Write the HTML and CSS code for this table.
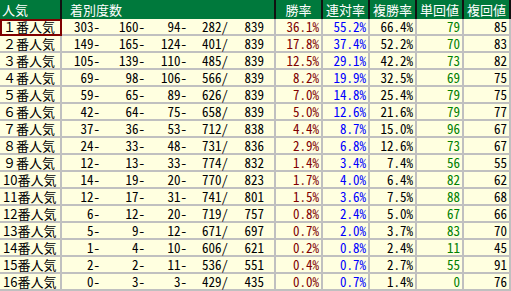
FILE: index.html
```html
<!DOCTYPE html>
<html lang="ja">
<head>
<meta charset="utf-8">
<title>人気別成績</title>
<link rel="stylesheet" href="styles.css">
</head>
<body>
<table class="stats">
<thead>
<tr>
<th class="c-name h-left">人気</th>
<th class="c-count h-left2">着別度数</th>
<th class="c-rate">勝率</th>
<th class="c-rate">連対率</th>
<th class="c-rate">複勝率</th>
<th class="c-rate">単回値</th>
<th class="c-rate">複回値</th>
</tr>
</thead>
<tbody>
<tr><td class="name sel">１番人気</td><td class="count"><div class="cnt"><span class="n1">303-</span><span class="n2">160-</span><span class="n3">94-</span><span class="n4">282/</span><span class="n5">839</span></div></td><td class="num win">36.1%</td><td class="num ren">55.2%</td><td class="num">66.4%</td><td class="num tan">79</td><td class="num">85</td></tr>
<tr><td class="name">２番人気</td><td class="count"><div class="cnt"><span class="n1">149-</span><span class="n2">165-</span><span class="n3">124-</span><span class="n4">401/</span><span class="n5">839</span></div></td><td class="num win">17.8%</td><td class="num ren">37.4%</td><td class="num">52.2%</td><td class="num tan">70</td><td class="num">83</td></tr>
<tr><td class="name">３番人気</td><td class="count"><div class="cnt"><span class="n1">105-</span><span class="n2">139-</span><span class="n3">110-</span><span class="n4">485/</span><span class="n5">839</span></div></td><td class="num win">12.5%</td><td class="num ren">29.1%</td><td class="num">42.2%</td><td class="num tan">73</td><td class="num">82</td></tr>
<tr><td class="name">４番人気</td><td class="count"><div class="cnt"><span class="n1">69-</span><span class="n2">98-</span><span class="n3">106-</span><span class="n4">566/</span><span class="n5">839</span></div></td><td class="num win">8.2%</td><td class="num ren">19.9%</td><td class="num">32.5%</td><td class="num tan">69</td><td class="num">75</td></tr>
<tr><td class="name">５番人気</td><td class="count"><div class="cnt"><span class="n1">59-</span><span class="n2">65-</span><span class="n3">89-</span><span class="n4">626/</span><span class="n5">839</span></div></td><td class="num win">7.0%</td><td class="num ren">14.8%</td><td class="num">25.4%</td><td class="num tan">79</td><td class="num">75</td></tr>
<tr><td class="name">６番人気</td><td class="count"><div class="cnt"><span class="n1">42-</span><span class="n2">64-</span><span class="n3">75-</span><span class="n4">658/</span><span class="n5">839</span></div></td><td class="num win">5.0%</td><td class="num ren">12.6%</td><td class="num">21.6%</td><td class="num tan">79</td><td class="num">77</td></tr>
<tr><td class="name">７番人気</td><td class="count"><div class="cnt"><span class="n1">37-</span><span class="n2">36-</span><span class="n3">53-</span><span class="n4">712/</span><span class="n5">838</span></div></td><td class="num win">4.4%</td><td class="num ren">8.7%</td><td class="num">15.0%</td><td class="num tan">96</td><td class="num">67</td></tr>
<tr><td class="name">８番人気</td><td class="count"><div class="cnt"><span class="n1">24-</span><span class="n2">33-</span><span class="n3">48-</span><span class="n4">731/</span><span class="n5">836</span></div></td><td class="num win">2.9%</td><td class="num ren">6.8%</td><td class="num">12.6%</td><td class="num tan">73</td><td class="num">67</td></tr>
<tr><td class="name">９番人気</td><td class="count"><div class="cnt"><span class="n1">12-</span><span class="n2">13-</span><span class="n3">33-</span><span class="n4">774/</span><span class="n5">832</span></div></td><td class="num win">1.4%</td><td class="num ren">3.4%</td><td class="num">7.4%</td><td class="num tan">56</td><td class="num">55</td></tr>
<tr><td class="name">10番人気</td><td class="count"><div class="cnt"><span class="n1">14-</span><span class="n2">19-</span><span class="n3">20-</span><span class="n4">770/</span><span class="n5">823</span></div></td><td class="num win">1.7%</td><td class="num ren">4.0%</td><td class="num">6.4%</td><td class="num tan">82</td><td class="num">62</td></tr>
<tr><td class="name">11番人気</td><td class="count"><div class="cnt"><span class="n1">12-</span><span class="n2">17-</span><span class="n3">31-</span><span class="n4">741/</span><span class="n5">801</span></div></td><td class="num win">1.5%</td><td class="num ren">3.6%</td><td class="num">7.5%</td><td class="num tan">88</td><td class="num">68</td></tr>
<tr><td class="name">12番人気</td><td class="count"><div class="cnt"><span class="n1">6-</span><span class="n2">12-</span><span class="n3">20-</span><span class="n4">719/</span><span class="n5">757</span></div></td><td class="num win">0.8%</td><td class="num ren">2.4%</td><td class="num">5.0%</td><td class="num tan">67</td><td class="num">66</td></tr>
<tr><td class="name">13番人気</td><td class="count"><div class="cnt"><span class="n1">5-</span><span class="n2">9-</span><span class="n3">12-</span><span class="n4">671/</span><span class="n5">697</span></div></td><td class="num win">0.7%</td><td class="num ren">2.0%</td><td class="num">3.7%</td><td class="num tan">83</td><td class="num">70</td></tr>
<tr><td class="name">14番人気</td><td class="count"><div class="cnt"><span class="n1">1-</span><span class="n2">4-</span><span class="n3">10-</span><span class="n4">606/</span><span class="n5">621</span></div></td><td class="num win">0.2%</td><td class="num ren">0.8%</td><td class="num">2.4%</td><td class="num tan">11</td><td class="num">45</td></tr>
<tr><td class="name">15番人気</td><td class="count"><div class="cnt"><span class="n1">2-</span><span class="n2">2-</span><span class="n3">11-</span><span class="n4">536/</span><span class="n5">551</span></div></td><td class="num win">0.4%</td><td class="num ren">0.7%</td><td class="num">2.7%</td><td class="num tan">55</td><td class="num">91</td></tr>
<tr><td class="name">16番人気</td><td class="count"><div class="cnt"><span class="n1">0-</span><span class="n2">3-</span><span class="n3">3-</span><span class="n4">429/</span><span class="n5">435</span></div></td><td class="num win">0.0%</td><td class="num ren">0.7%</td><td class="num">1.4%</td><td class="num tan">0</td><td class="num">76</td></tr>
</tbody>
</table>
</body>
</html>
```
FILE: styles.css
```css
html, body {
  margin: 0;
  padding: 0;
  background: #ffffff;
}
.stats {
  table-layout: fixed;
  border-collapse: separate;
  border-spacing: 0;
  width: 511px;
  font-family: "Noto Sans Mono CJK JP", "Liberation Mono", "Noto Sans CJK JP", monospace;
  font-size: 13px;
}
.stats th, .stats td {
  box-sizing: border-box;
  padding: 0;
  white-space: nowrap;
}
.stats th {
  height: 19px;
  line-height: 19px;
  background: #00793c;
  color: #ffffff;
  font-family: "Noto Sans CJK JP", sans-serif;
  font-weight: normal;
  font-size: 13px;
  text-align: center;
  border-right: 2px solid #111111;
}
.c-name { width: 62px; }
.c-count { width: 214px; }
.c-rate { width: 47px; }
.stats th.h-left { text-align: left; padding-left: 2px; }
.stats th.h-left2 { text-align: left; padding-left: 8px; }
.stats td {
  height: 17px;
  line-height: 15px;
  background: #ffffe0;
  color: #000000;
  border-right: 2px solid #c0c0c0;
  border-bottom: 2px solid #c0c0c0;
}
.stats td.name {
  font-family: "Noto Sans CJK JP", sans-serif;
  padding-left: 3px;
}
.stats td.sel {
  outline: 2px solid #800000;
  outline-offset: -2px;
}
.stats td.num {
  text-align: right;
  padding-right: 2px;
}
.stats td.win { color: #800000; }
.stats td.ren { color: #0000ff; }
.stats td.tan { color: #008000; }
.cnt {
  display: flex;
}
.cnt span {
  flex: none;
  text-align: right;
}
.cnt .n1 { width: 38px; }
.cnt .n2 { width: 45px; }
.cnt .n3 { width: 42px; }
.cnt .n4 { width: 41px; }
.cnt .n5 { width: 36px; }
```
